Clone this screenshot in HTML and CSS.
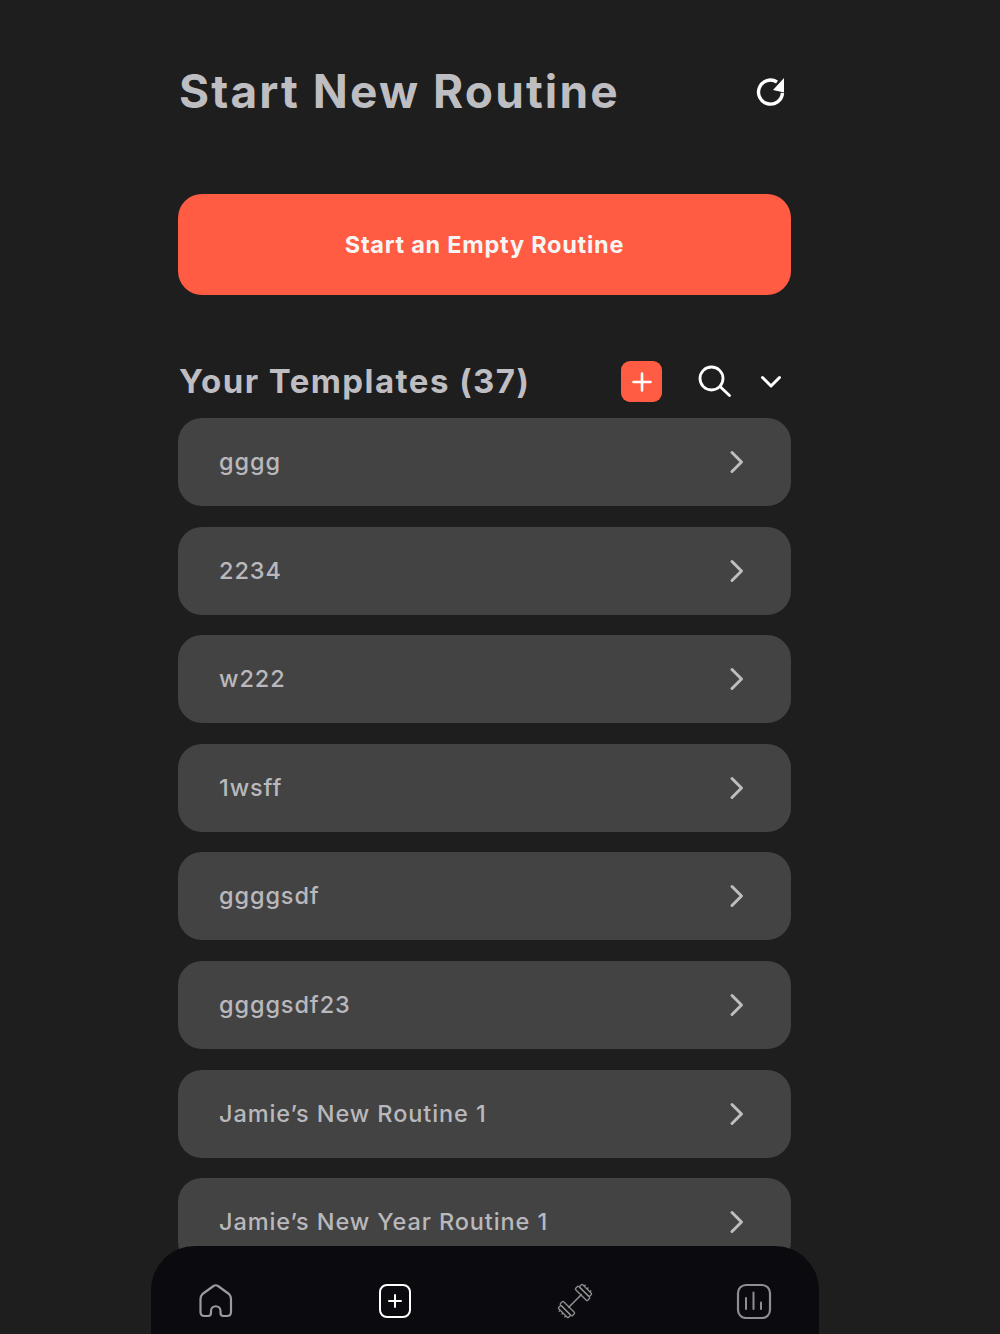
FILE: index.html
```html
<!DOCTYPE html>
<html>
<head>
    <title>Start New Routine</title>
    <link rel="stylesheet" href="styles.css">
</head>
<body>
    <main class="page">
        <header class="page-head">
            <h1>Start New Routine</h1>
            <button class="icon-btn refresh" type="button" aria-label="Refresh">
                <svg width="30" height="30" viewBox="0 0 30 30" fill="none">
                    <path d="M26.500 16A12 12 0 1 1 21 5" stroke="#fff" stroke-width="3.400"/>
                    <path d="M28 1v14.500L17 13z" fill="#fff"/>
                </svg>
            </button>
        </header>

        <button class="btn-empty" type="button">Start an Empty Routine</button>

        <section class="templates">
            <div class="templates-head">
                <h2>Your Templates (37)</h2>
                <button class="btn-add" type="button" aria-label="Add template">
                    <svg width="24" height="24" viewBox="0 0 24 24" fill="none" stroke="#fff" stroke-width="2.600" stroke-linecap="round">
                        <path d="M12 3.500v17M3.500 12h17"/>
                    </svg>
                </button>
                <button class="icon-btn search" type="button" aria-label="Search">
                    <svg width="36" height="36" viewBox="0 0 36 36" fill="none" stroke="#fff" stroke-width="2.800" stroke-linecap="round">
                        <circle cx="14.500" cy="14.500" r="11.500"/>
                        <path d="M23.500 23l9 8.500"/>
                    </svg>
                </button>
                <button class="icon-btn collapse" type="button" aria-label="Collapse">
                    <svg width="22" height="14" viewBox="0 0 22 14" fill="none" stroke="#fff" stroke-width="3" stroke-linecap="round" stroke-linejoin="round">
                        <path d="M2.500 2.500l8.500 8.500 8.500-8.500"/>
                    </svg>
                </button>
            </div>

            <ul class="template-list">
                <li class="template-row"><span>gggg</span><svg class="chev" width="16" height="24" viewBox="0 0 16 24"><path d="M3 2.500l9.500 9.500L3 21.500"/></svg></li>
                <li class="template-row"><span>2234</span><svg class="chev" width="16" height="24" viewBox="0 0 16 24"><path d="M3 2.500l9.500 9.500L3 21.500"/></svg></li>
                <li class="template-row"><span>w222</span><svg class="chev" width="16" height="24" viewBox="0 0 16 24"><path d="M3 2.500l9.500 9.500L3 21.500"/></svg></li>
                <li class="template-row"><span>1wsff</span><svg class="chev" width="16" height="24" viewBox="0 0 16 24"><path d="M3 2.500l9.500 9.500L3 21.500"/></svg></li>
                <li class="template-row"><span>ggggsdf</span><svg class="chev" width="16" height="24" viewBox="0 0 16 24"><path d="M3 2.500l9.500 9.500L3 21.500"/></svg></li>
                <li class="template-row"><span>ggggsdf23</span><svg class="chev" width="16" height="24" viewBox="0 0 16 24"><path d="M3 2.500l9.500 9.500L3 21.500"/></svg></li>
                <li class="template-row"><span>Jamie’s New Routine 1</span><svg class="chev" width="16" height="24" viewBox="0 0 16 24"><path d="M3 2.500l9.500 9.500L3 21.500"/></svg></li>
                <li class="template-row"><span>Jamie’s New Year Routine 1</span><svg class="chev" width="16" height="24" viewBox="0 0 16 24"><path d="M3 2.500l9.500 9.500L3 21.500"/></svg></li>
            </ul>
        </section>
    </main>

    <nav class="tabbar">
        <svg width="36" height="36" viewBox="0 0 36 36" fill="none" stroke="#9b9b9e" stroke-width="2.200" stroke-linejoin="round">
            <path d="M15.500 3 4.500 11Q2.500 13 2.500 16V29Q2.500 33 6.500 33H10Q13 33 13 30V28A4.750 4.750 0 0 1 22.500 28V30Q22.500 33 25.500 33H29Q33 33 33 29V16Q33 13 31 11L20 3Q17.750 1.500 15.500 3Z"/>
        </svg>
        <svg width="36" height="36" viewBox="0 0 36 36" fill="none" stroke="#fff" stroke-width="2" stroke-linecap="round">
            <rect x="3" y="2" width="30" height="32" rx="7"/>
            <path d="M18 12v12M12 18h12"/>
        </svg>
        <svg width="36" height="36" viewBox="0 0 36 36" fill="none" stroke="#8f8f92" stroke-width="1.300" stroke-linejoin="round">
            <g transform="rotate(-45 18 18)">
                <path d="M8.500 18h19" stroke-width="1.600"/>
                <rect x="26.500" y="9.500" width="4.500" height="17" rx="1"/>
                <rect x="31" y="11" width="4" height="14" rx="1"/>
                <path d="M35 14h2M35 18h2M35 22h2"/>
                <rect x="5" y="9.500" width="4.500" height="17" rx="1"/>
                <rect x="1" y="11" width="4" height="14" rx="1"/>
                <path d="M1 14h-2M1 18h-2M1 22h-2"/>
            </g>
        </svg>
        <svg width="36" height="36" viewBox="0 0 36 36" fill="none" stroke="#8f8f92" stroke-linecap="round">
            <rect x="2" y="2" width="32" height="33" rx="8" stroke-width="2.200"/>
            <path d="M10 15v11M17.500 9.500V26M25 19.500V26" stroke-width="2"/>
        </svg>
    </nav>
</body>
</html>
```

FILE: styles.css
```css
html, body {height: 100%; margin: 0;}
body {background: #1e1e1e; font-family: Inter, "Noto Sans", sans-serif; overflow: hidden; position: relative;}
button {border: none; background: none; padding: 0; font-family: inherit; cursor: pointer;}
.page {width: 613px; margin-left: 178px;}
.page-head {height: 181px; padding-bottom: 3px; display: flex; align-items: center; justify-content: space-between;}
.page-head h1 {margin: 0; font-size: 46px; font-weight: 700; letter-spacing: 2.1px; color: #bebdc1; padding-left: 1px;}
.icon-btn {display: flex; align-items: center; justify-content: center;}
.refresh {margin: 2px 5px 0 0;}
.btn-empty {display: block; width: 100%; height: 101px; margin-top: 10px; border-radius: 24px; background: #ff5c43; color: #f7f5f3; font-size: 23.5px; font-weight: 700; letter-spacing: 0.75px;}
.templates {margin-top: 58px;}
.templates-head {height: 57px; padding-bottom: 8px; display: flex; align-items: center;}
.templates-head h2 {margin: 0 0 2px; flex: 1; font-size: 33px; font-weight: 700; letter-spacing: 1.45px; color: #bebdc1; padding-left: 1px;}
.btn-add {width: 41px; height: 41px; border-radius: 9px; background: #ff5c43; display: flex; align-items: center; justify-content: center; margin-right: 35px;}
.search {margin: 1px 27px 0 0;}
.collapse {margin: 1px 9px 0 0;}
.template-list {list-style: none; margin: 0; padding: 0; display: flex; flex-direction: column; gap: 20.6px;}
.template-row {height: 88px; box-sizing: border-box; flex: none; padding: 0 46px 0 41px; border-radius: 24px; background: #434343; color: #b9b8bc; font-size: 23.5px; font-weight: 500; letter-spacing: 0.9px; display: flex; align-items: center; justify-content: space-between;}
.template-row span {margin-bottom: 1px;}
.chev {fill: none; stroke: #bebdc1; stroke-width: 3; stroke-linecap: round; stroke-linejoin: round;}
.tabbar {position: absolute; left: 151px; bottom: 0; width: 668px; height: 88px; box-sizing: border-box; padding: 22px 47px 0 47px; border-radius: 44px 44px 0 0; background: #0b0b0f; display: flex; align-items: center; justify-content: space-between;}
```
